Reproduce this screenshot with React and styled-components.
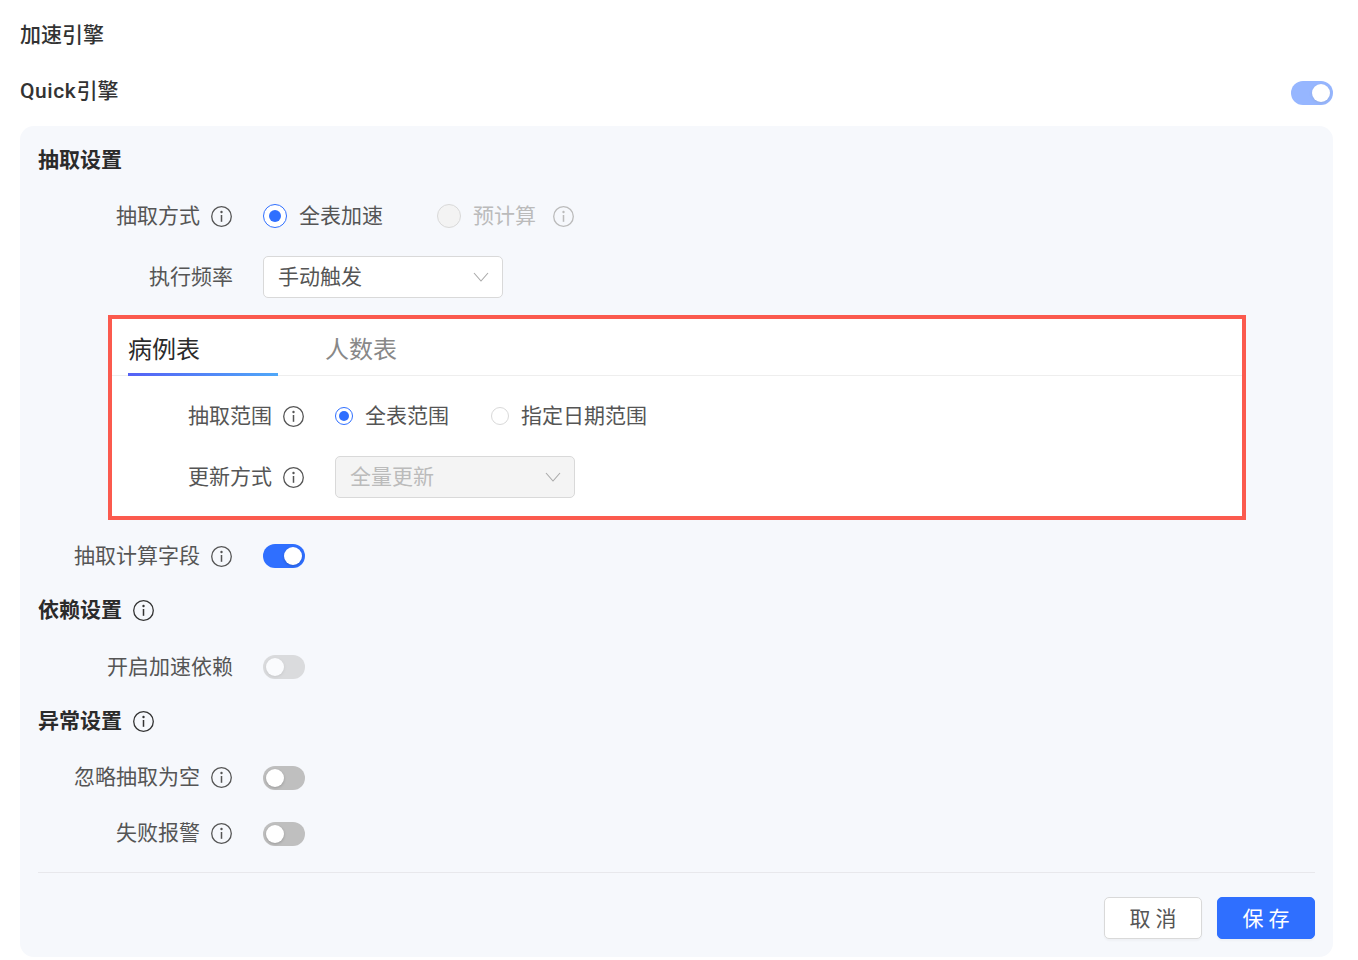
import React from "react";
import styled, { createGlobalStyle } from "styled-components";

const GlobalStyle = createGlobalStyle`
  body {
    margin: 0;
    background: #fff;
    font-family: "Roboto", "Noto Sans CJK SC", sans-serif;
    font-size: 21px;
    line-height: 24px;
    color: #555;
  }
`;

function InfoIcon({ color = "#555", size = 21 }) {
  return (
    <svg width={size} height={size} viewBox="0 0 21 21" fill="none" style={{ flex: "none" }}>
      <circle cx="10.5" cy="10.5" r="9.8" stroke={color} strokeWidth="1.3" />
      <circle cx="10.5" cy="6" r="1.2" fill={color} />
      <path d="M10.5 9v6.8" stroke={color} strokeWidth="1.5" />
    </svg>
  );
}

function Chevron({ color = "#aaa" }) {
  return (
    <svg width="16" height="10" viewBox="0 0 16 10" fill="none">
      <path d="M1 1l7 8 7-8" stroke={color} strokeWidth="1.1" />
    </svg>
  );
}

function App() {
  return (
    <Page>
      <GlobalStyle />
      <PageTitle>加速引擎</PageTitle>
      <EngineRow>
        <EngineName>
          <Latin>Quick</Latin>引擎
        </EngineName>
        <Toggle $on $faded />
      </EngineRow>
      <Panel>
        <SectionTitle>抽取设置</SectionTitle>
        <Row $top={30} $height={24}>
          <Label>
            抽取方式
            <InfoIcon />
          </Label>
          <RadioGroup $gap={54}>
            <RadioItem>
              <Radio $checked />
              全表加速
            </RadioItem>
            <RadioItem $disabled>
              <Radio $disabled />
              预计算
              <InfoSlot>
                <InfoIcon color="#bbb" />
              </InfoSlot>
            </RadioItem>
          </RadioGroup>
        </Row>
        <Row $top={28} $height={42}>
          <Label>执行频率</Label>
          <Select>
            手动触发
            <Chevron />
          </Select>
        </Row>
        <TableBox>
          <Tabs>
            <Tab $active>病例表</Tab>
            <Tab>人数表</Tab>
          </Tabs>
          <Row $top={28} $height={24} $labelWidth={193}>
            <Label>
              抽取范围
              <InfoIcon />
            </Label>
            <RadioGroup $gap={42}>
              <RadioItem>
                <Radio $checked $small />
                全表范围
              </RadioItem>
              <RadioItem>
                <Radio $small />
                指定日期范围
              </RadioItem>
            </RadioGroup>
          </Row>
          <Row $top={28} $height={42} $labelWidth={193}>
            <Label>
              更新方式
              <InfoIcon />
            </Label>
            <Select $disabled>
              全量更新
              <Chevron />
            </Select>
          </Row>
        </TableBox>
        <Row $top={24} $height={24}>
          <Label>
            抽取计算字段
            <InfoIcon />
          </Label>
          <Toggle $on />
        </Row>
        <SectionTitle $top={28}>
          依赖设置
          <InfoIcon color="#333" />
        </SectionTitle>
        <Row $top={31} $height={24}>
          <Label>开启加速依赖</Label>
          <Toggle $faded />
        </Row>
        <SectionTitle $top={28}>
          异常设置
          <InfoIcon color="#333" />
        </SectionTitle>
        <Row $top={30} $height={24}>
          <Label>
            忽略抽取为空
            <InfoIcon />
          </Label>
          <Toggle $low />
        </Row>
        <Row $top={32} $height={24}>
          <Label>
            失败报警
            <InfoIcon />
          </Label>
          <Toggle $low />
        </Row>
        <Divider />
        <Footer>
          <Button>取 消</Button>
          <Button $primary>保 存</Button>
        </Footer>
      </Panel>
    </Page>
  );
}

export default App;

const Page = styled.div`
  padding: 0 25px 3px 20px;
`;

const PageTitle = styled.div`
  height: 68px;
  line-height: 70px;
  font-weight: 500;
  color: #333;
`;

const EngineRow = styled.div`
  height: 50px;
  display: flex;
  align-items: center;
  justify-content: space-between;
`;

const EngineName = styled.div`
  padding-bottom: 4px;
  font-weight: 500;
  color: #333;
`;

const Latin = styled.span`
  letter-spacing: 0.6px;
`;

const Panel = styled.div`
  margin-top: 8px;
  padding: 20px 18px 18px;
  background: #f6f8fc;
  border-radius: 14px;
`;

const SectionTitle = styled.div`
  height: 28px;
  margin-top: ${(props) => props.$top || 0}px;
  display: flex;
  align-items: center;
  gap: 11px;
  font-weight: 700;
  color: #2b2b2b;
`;

const Row = styled.div`
  display: grid;
  grid-template-columns: ${(props) => props.$labelWidth || 195}px 1fr;
  grid-template-rows: 100%;
  column-gap: 30px;
  align-items: center;
  height: ${(props) => props.$height}px;
  margin-top: ${(props) => props.$top}px;
`;

const Label = styled.div`
  display: flex;
  align-items: center;
  justify-content: flex-end;
  gap: 11px;
  color: #555;
  white-space: nowrap;

  svg {
    margin-right: 1px;
  }
`;

const RadioGroup = styled.div`
  display: flex;
  align-items: center;
  gap: ${(props) => props.$gap}px;
`;

const RadioItem = styled.div`
  display: flex;
  align-items: center;
  gap: 12px;
  color: ${(props) => (props.$disabled ? "#bbb" : "#555")};
`;

const InfoSlot = styled.span`
  display: flex;
  margin-left: 5px;
`;

const Radio = styled.span`
  box-sizing: border-box;
  width: ${(props) => (props.$small ? 18 : 24)}px;
  height: ${(props) => (props.$small ? 18 : 24)}px;
  border-radius: 50%;
  display: flex;
  align-items: center;
  justify-content: center;
  flex: none;
  background: ${(props) => (props.$disabled ? "#f3f3f3" : "#fff")};
  border: 1px solid ${(props) => (props.$checked ? "#2f6fff" : "#d9d9d9")};

  &::after {
    content: "";
    display: ${(props) => (props.$checked ? "block" : "none")};
    width: ${(props) => (props.$small ? 10 : 12)}px;
    height: ${(props) => (props.$small ? 10 : 12)}px;
    border-radius: 50%;
    background: #2f6fff;
  }
`;

const Select = styled.div`
  box-sizing: border-box;
  width: 240px;
  height: 42px;
  padding: 0 13px 0 14px;
  display: flex;
  align-items: center;
  justify-content: space-between;
  border: 1px solid #d9d9d9;
  border-radius: 5px;
  background: ${(props) => (props.$disabled ? "#f4f4f4" : "#fff")};
  color: ${(props) => (props.$disabled ? "#bbb" : "#555")};
`;

const TableBox = styled.div`
  box-sizing: border-box;
  width: 1138px;
  height: 205px;
  margin: 17px 0 0 70px;
  border: 4px solid #fb5a4e;
  background: #fff;
`;

const Tabs = styled.div`
  height: 57px;
  box-sizing: border-box;
  display: flex;
  gap: 47px;
  padding-left: 16px;
  border-bottom: 1px solid #eeeeee;
`;

const Tab = styled.div`
  width: ${(props) => (props.$active ? "150px" : "auto")};
  height: 57px;
  box-sizing: border-box;
  padding-top: 13px;
  font-size: 24px;
  line-height: 36px;
  color: ${(props) => (props.$active ? "#2b2b2b" : "#888")};
  border-bottom: 3px solid transparent;
  border-image: ${(props) =>
    props.$active ? "linear-gradient(90deg, #5560f5, #4fa8f8) 1" : "none"};
`;

const Toggle = styled.span`
  display: block;
  position: relative;
  width: 42px;
  height: 24px;
  margin-top: ${(props) => (props.$low ? 2 : 0)}px;
  border-radius: 12px;
  background: ${(props) => (props.$on ? "#2f6fff" : "#bfbfbf")};
  opacity: ${(props) => (props.$faded ? 0.5 : 1)};

  &::after {
    content: "";
    position: absolute;
    top: 3px;
    left: ${(props) => (props.$on ? 21 : 3)}px;
    width: 18px;
    height: 18px;
    border-radius: 50%;
    background: #fff;
    box-shadow: 0 1px 3px rgba(0, 0, 0, 0.2);
  }
`;

const Divider = styled.div`
  height: 1px;
  margin-top: 27px;
  background: #e8e8ec;
`;

const Footer = styled.div`
  margin-top: 24px;
  display: flex;
  justify-content: flex-end;
  gap: 15px;
`;

const Button = styled.div`
  box-sizing: border-box;
  width: 98px;
  height: 42px;
  padding-top: 2px;
  display: flex;
  align-items: center;
  justify-content: center;
  border-radius: 5px;
  border: 1px solid ${(props) => (props.$primary ? "#2f6fff" : "#d9d9d9")};
  background: ${(props) => (props.$primary ? "#2f6fff" : "#fff")};
  color: ${(props) => (props.$primary ? "#fff" : "#555")};
  box-shadow: 0 2px 2px rgba(0, 0, 0, 0.03);
`;
